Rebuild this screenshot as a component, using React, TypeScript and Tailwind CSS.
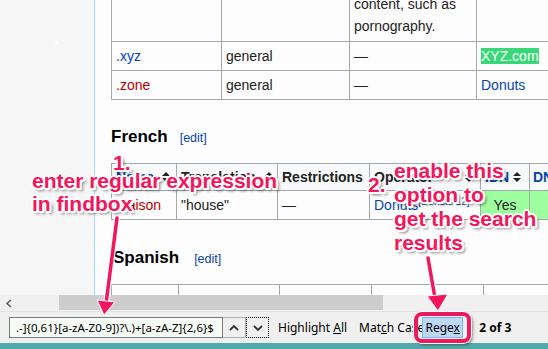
import React from "react";

const SortIcon = () => (
  <svg width="8" height="10" viewBox="0 0 8 10" className="shrink-0">
    <path d="M4 0 L8 4 L0 4 Z" fill="#222" />
    <path d="M4 10 L8 6 L0 6 Z" fill="#222" />
  </svg>
);

const annot =
  "absolute font-['Liberation_Sans',Arial,sans-serif] font-bold text-[21px] leading-[23px] text-[#f2165c] whitespace-nowrap [text-shadow:-1px_-1px_0_#fff,1px_-1px_0_#fff,-1px_1px_0_#fff,1px_1px_0_#fff,0_-2px_0_#fff,0_2px_0_#fff,-2px_0_0_#fff,2px_0_0_#fff,2px_2px_0_#fff,3px_3px_3px_rgba(0,0,0,0.55)]";

export default function App() {
  return (
    <div className="relative w-[548px] h-[349px] overflow-hidden bg-[#f0f0f0] font-['Liberation_Sans',Arial,sans-serif] text-[#222]">
      {/* page viewport */}
      <div className="flex h-[295px]">
        <div className="w-[94px] shrink-0 bg-[#f6f6f6] pt-[41px] pl-[55px]">
          <div className="w-[3px] h-[3px] rounded-full bg-white" />
        </div>
        <div className="flex-1 min-w-0 border-l border-[#a7d7f9] bg-[#fdfdfd] pl-[16px] overflow-hidden text-[14px]">
          {/* top table */}
          <table className="-mt-[11px] w-[470px] table-fixed border-collapse leading-[22px]">
            <colgroup>
              <col className="w-[110px]" />
              <col className="w-[128px]" />
              <col className="w-[127px]" />
              <col className="w-[105px]" />
            </colgroup>
            <tbody>
              <tr>
                <td className="border border-[#a2a9b1] px-[4px] pt-[3px] pb-[4px]" />
                <td className="border border-[#a2a9b1] px-[4px] pt-[3px] pb-[4px]" />
                <td className="border border-[#a2a9b1] px-[4px] pt-[3px] pb-[4px]">
                  content, such as
                  <br />
                  pornography.
                </td>
                <td className="border border-[#a2a9b1] px-[4px] pt-[3px] pb-[4px]" />
              </tr>
              <tr>
                <td className="border border-[#a2a9b1] px-[4px] py-[3px] text-[#0645ad]">.xyz</td>
                <td className="border border-[#a2a9b1] px-[4px] py-[3px]">general</td>
                <td className="border border-[#a2a9b1] px-[4px] py-[3px]">—</td>
                <td className="border border-[#a2a9b1] px-[4px] py-[3px]">
                  <span className="bg-[#38d878] text-white">XYZ.com</span>
                </td>
              </tr>
              <tr>
                <td className="border border-[#a2a9b1] px-[4px] py-[3px] text-[#ba0000]">.zone</td>
                <td className="border border-[#a2a9b1] px-[4px] py-[3px]">general</td>
                <td className="border border-[#a2a9b1] px-[4px] py-[3px]">—</td>
                <td className="border border-[#a2a9b1] px-[4px] py-[3px] text-[#0645ad]">Donuts</td>
              </tr>
            </tbody>
          </table>

          {/* French */}
          <div className="mt-[23px] h-[27px] leading-[27px] flex items-baseline">
            <span className="text-[17px] font-bold text-black">French</span>
            <span className="ml-[12px] text-[12.5px] text-[#0645ad]">[edit]</span>
          </div>
          <table className="mt-[13px] w-[470px] table-fixed border-collapse leading-[22px]">
            <colgroup>
              <col className="w-[65px]" />
              <col className="w-[101px]" />
              <col className="w-[92px]" />
              <col className="w-[111px]" />
              <col className="w-[49px]" />
              <col className="w-[52px]" />
            </colgroup>
            <tbody>
              <tr className="bg-[#f8f9fa] font-bold">
                <td className="border border-[#a2a9b1] pl-[4px] pr-[6px] py-[2px]">
                  <div className="flex items-center justify-between">
                    <span className="text-[#0645ad]">Name</span>
                    <SortIcon />
                  </div>
                </td>
                <td className="border border-[#a2a9b1] pl-[4px] pr-[4px] py-[2px]">
                  <div className="flex items-center justify-between">
                    <span>Translation</span>
                    <SortIcon />
                  </div>
                </td>
                <td className="border border-[#a2a9b1] pl-[4px] py-[2px] overflow-hidden whitespace-nowrap">Restrictions</td>
                <td className="border border-[#a2a9b1] pl-[4px] pr-[7px] py-[2px]">
                  <div className="flex items-center justify-between">
                    <span>Operator</span>
                    <SortIcon />
                  </div>
                </td>
                <td className="border border-[#a2a9b1] pl-[4px] pr-[8px] py-[2px]">
                  <div className="flex items-center justify-between">
                    <span className="text-[#0645ad]">IDN</span>
                    <SortIcon />
                  </div>
                </td>
                <td className="border border-[#a2a9b1] pl-[3px] py-[2px] text-[#0645ad] whitespace-nowrap overflow-hidden">DNSSEC</td>
              </tr>
              <tr>
                <td className="border border-[#a2a9b1] px-[4px] py-[3px] text-[#ba0000]">Maison</td>
                <td className="border border-[#a2a9b1] px-[4px] py-[3px]">"house"</td>
                <td className="border border-[#a2a9b1] px-[4px] py-[3px]">—</td>
                <td className="border border-[#a2a9b1] px-[4px] py-[3px] text-[#0645ad] whitespace-nowrap">
                  Donuts<sup className="text-[10px]">[Donuts 12]</sup>
                </td>
                <td className="border border-[#a2a9b1] px-[4px] py-[3px] bg-[#9eff9e] text-center">Yes</td>
                <td className="border border-[#a2a9b1] px-[4px] py-[3px] bg-[#9eff9e]" />
              </tr>
            </tbody>
          </table>

          {/* Spanish */}
          <div className="mt-[24px] h-[27px] leading-[27px] flex items-baseline pl-[2px]">
            <span className="text-[17px] font-bold text-black">Spanish</span>
            <span className="ml-[15px] text-[12.5px] text-[#0645ad]">[edit]</span>
          </div>
          <table className="mt-[13px] w-[470px] table-fixed border-collapse">
            <colgroup>
              <col className="w-[67px]" />
              <col className="w-[101px]" />
              <col className="w-[92px]" />
              <col className="w-[112px]" />
              <col className="w-[98px]" />
            </colgroup>
            <tbody>
              <tr>
                <td className="border border-[#a2a9b1] h-[30px]" />
                <td className="border border-[#a2a9b1] h-[30px]" />
                <td className="border border-[#a2a9b1] h-[30px]" />
                <td className="border border-[#a2a9b1] h-[30px]" />
                <td className="border border-[#a2a9b1] h-[30px]" />
              </tr>
            </tbody>
          </table>
        </div>
      </div>

      {/* horizontal scrollbar */}
      <div className="flex h-[16px] bg-[#f0f0f0]">
        <div className="w-[17px] flex items-center justify-center">
          <svg width="8" height="9" viewBox="0 0 8 9">
            <path d="M6 1 L2 4.5 L6 8" stroke="#606060" strokeWidth="1.6" fill="none" />
          </svg>
        </div>
        <div className="ml-[42px] w-[324px] h-[15px] bg-[#cdcdcd]" />
      </div>

      {/* find bar */}
      <div className="flex items-center h-[32px] pl-[9px] border-t border-[#e3e3e3] bg-[#f0f0f0] font-['Noto_Sans',sans-serif] text-[12px] text-black">
        <div className="w-[214px] h-[21px] border border-[#7a7a7a] bg-[#f5fcf5] flex items-center pl-[6px] overflow-hidden whitespace-nowrap text-[11.5px]">
          .-]{"{"}0,61{"}"}[a-zA-Z0-9])?\.)+[a-zA-Z]{"{"}2,6{"}"}$
        </div>
        <div className="w-[23px] h-[21px] border border-[#adadad] border-l-0 flex items-center justify-center bg-[#f0f0f0]">
          <svg width="10" height="6" viewBox="0 0 10 6">
            <path d="M1 5 L5 1 L9 5" stroke="#333" strokeWidth="1.8" fill="none" />
          </svg>
        </div>
        <div className="w-[23px] h-[21px] border border-dotted border-black flex items-center justify-center bg-[#f0f0f0]">
          <svg width="10" height="6" viewBox="0 0 10 6">
            <path d="M1 1 L5 5 L9 1" stroke="#333" strokeWidth="1.8" fill="none" />
          </svg>
        </div>
        <span className="ml-[9px]">
          Highlight <span className="underline">A</span>ll
        </span>
        <span className="ml-[12px]">
          Mat<span className="underline">c</span>h Case
        </span>
        <div className="-ml-[2px] w-[41px] h-[21px] bg-[#bcd8f4] border border-[#7eb4ea] flex items-center justify-center">
          <span>
            Rege<span className="underline">x</span>
          </span>
        </div>
        <span className="ml-[16px] font-bold">2 of 3</span>
      </div>
      <div className="h-[6px] bg-[#52aaa8]" />

      {/* annotations overlay */}
      <div className="absolute inset-0 pointer-events-none">
        <svg width="548" height="349" className="absolute inset-0">
          <g stroke="#fff" strokeWidth="6" fill="#fff" strokeLinejoin="round" opacity="0.9">
            <path d="M117 218 L106 304" />
            <path d="M428 258 L435 298" />
          </g>
          <g stroke="#f2165c" strokeWidth="3.5" strokeLinecap="round">
            <path d="M117 218 L106 304" />
            <path d="M428 258 L435 298" />
          </g>
          <path d="M97 300 L115 302 L104 315 Z" fill="#f2165c" stroke="#fff" strokeWidth="1" />
          <path d="M427 296 L448 294 L438 311 Z" fill="#f2165c" stroke="#fff" strokeWidth="1" />
        </svg>
        <div className="absolute left-[414px] top-[312px] w-[57px] h-[31px] rounded-[8px] border-[4px] border-[#ec1a5c] [box-shadow:0_0_0_1px_#fff,2px_2px_3px_rgba(0,0,0,0.4)]" />

        <div className={annot + " left-[113px] top-[151px]"}>1.</div>
        <div className={annot + " left-[32px] top-[169px]"}>enter regular expression</div>
        <div className={annot + " left-[32px] top-[192px]"}>in findbox</div>

        <div className={annot + " left-[368px] top-[173px]"}>2.</div>
        <div className={annot + " left-[394px] top-[159px] leading-[24px]"}>
          enable this
          <br />
          option to
          <br />
          get the search
          <br />
          results
        </div>
      </div>
    </div>
  );
}
